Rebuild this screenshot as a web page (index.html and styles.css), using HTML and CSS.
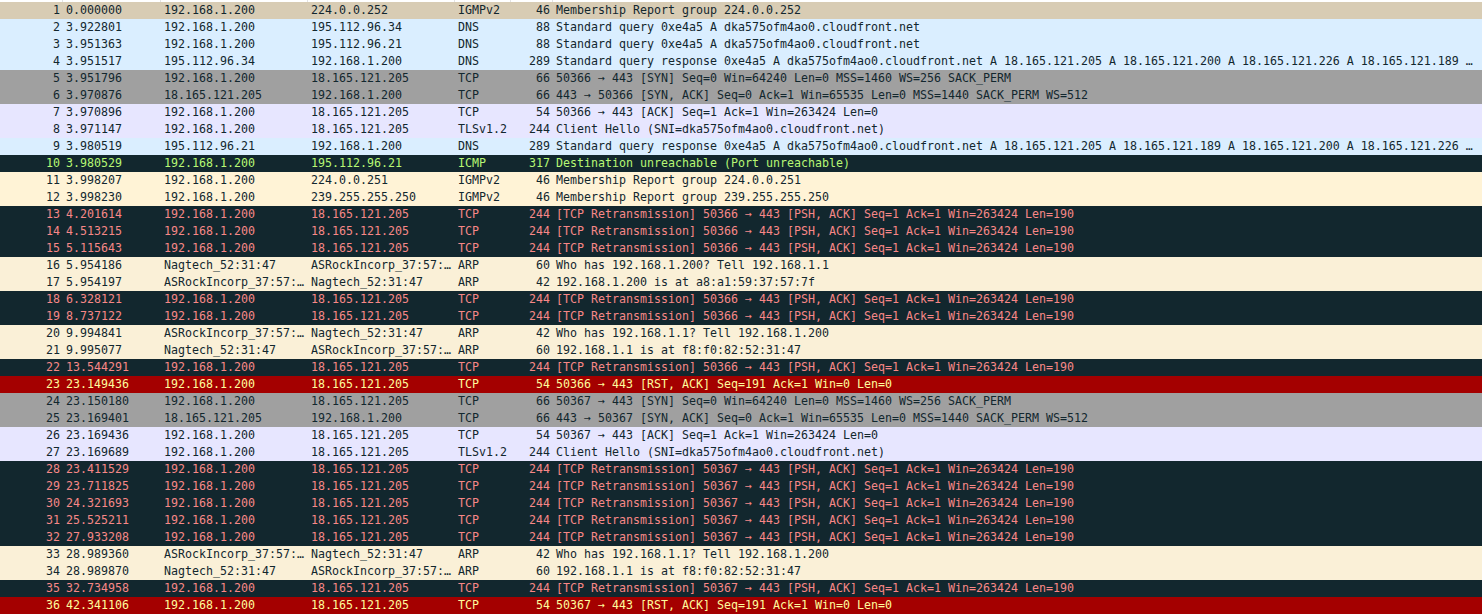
FILE: index.html
```html
<!DOCTYPE html>
<html lang="en">
<head>
<meta charset="utf-8">
<title>Packet list</title>
<link rel="stylesheet" href="styles.css">
</head>
<body>
<div class="head"><span class="hc hc-no"></span><span class="hc hc-time"></span><span class="hc hc-addr"></span><span class="hc hc-addr"></span><span class="hc hc-proto"></span><span class="hc hc-len"></span></div>
<div class="list">
<div class="row igmp1"><span class="no">1</span><span class="time">0.000000</span><span class="src">192.168.1.200</span><span class="dst">224.0.0.252</span><span class="proto">IGMPv2</span><span class="len">46</span><span class="info">Membership Report group 224.0.0.252</span></div>
<div class="row dns"><span class="no">2</span><span class="time">3.922801</span><span class="src">192.168.1.200</span><span class="dst">195.112.96.34</span><span class="proto">DNS</span><span class="len">88</span><span class="info">Standard query 0xe4a5 A dka575ofm4ao0.cloudfront.net</span></div>
<div class="row dns"><span class="no">3</span><span class="time">3.951363</span><span class="src">192.168.1.200</span><span class="dst">195.112.96.21</span><span class="proto">DNS</span><span class="len">88</span><span class="info">Standard query 0xe4a5 A dka575ofm4ao0.cloudfront.net</span></div>
<div class="row dns"><span class="no">4</span><span class="time">3.951517</span><span class="src">195.112.96.34</span><span class="dst">192.168.1.200</span><span class="proto">DNS</span><span class="len">289</span><span class="info">Standard query response 0xe4a5 A dka575ofm4ao0.cloudfront.net A 18.165.121.205 A 18.165.121.200 A 18.165.121.226 A 18.165.121.189 …</span></div>
<div class="row syn"><span class="no">5</span><span class="time">3.951796</span><span class="src">192.168.1.200</span><span class="dst">18.165.121.205</span><span class="proto">TCP</span><span class="len">66</span><span class="info">50366 → 443 [SYN] Seq=0 Win=64240 Len=0 MSS=1460 WS=256 SACK_PERM</span></div>
<div class="row syn"><span class="no">6</span><span class="time">3.970876</span><span class="src">18.165.121.205</span><span class="dst">192.168.1.200</span><span class="proto">TCP</span><span class="len">66</span><span class="info">443 → 50366 [SYN, ACK] Seq=0 Ack=1 Win=65535 Len=0 MSS=1440 SACK_PERM WS=512</span></div>
<div class="row tcp"><span class="no">7</span><span class="time">3.970896</span><span class="src">192.168.1.200</span><span class="dst">18.165.121.205</span><span class="proto">TCP</span><span class="len">54</span><span class="info">50366 → 443 [ACK] Seq=1 Ack=1 Win=263424 Len=0</span></div>
<div class="row tcp"><span class="no">8</span><span class="time">3.971147</span><span class="src">192.168.1.200</span><span class="dst">18.165.121.205</span><span class="proto">TLSv1.2</span><span class="len">244</span><span class="info">Client Hello (SNI=dka575ofm4ao0.cloudfront.net)</span></div>
<div class="row dns"><span class="no">9</span><span class="time">3.980519</span><span class="src">195.112.96.21</span><span class="dst">192.168.1.200</span><span class="proto">DNS</span><span class="len">289</span><span class="info">Standard query response 0xe4a5 A dka575ofm4ao0.cloudfront.net A 18.165.121.205 A 18.165.121.189 A 18.165.121.200 A 18.165.121.226 …</span></div>
<div class="row icmp"><span class="no">10</span><span class="time">3.980529</span><span class="src">192.168.1.200</span><span class="dst">195.112.96.21</span><span class="proto">ICMP</span><span class="len">317</span><span class="info">Destination unreachable (Port unreachable)</span></div>
<div class="row igmp2"><span class="no">11</span><span class="time">3.998207</span><span class="src">192.168.1.200</span><span class="dst">224.0.0.251</span><span class="proto">IGMPv2</span><span class="len">46</span><span class="info">Membership Report group 224.0.0.251</span></div>
<div class="row igmp2"><span class="no">12</span><span class="time">3.998230</span><span class="src">192.168.1.200</span><span class="dst">239.255.255.250</span><span class="proto">IGMPv2</span><span class="len">46</span><span class="info">Membership Report group 239.255.255.250</span></div>
<div class="row bad"><span class="no">13</span><span class="time">4.201614</span><span class="src">192.168.1.200</span><span class="dst">18.165.121.205</span><span class="proto">TCP</span><span class="len">244</span><span class="info">[TCP Retransmission] 50366 → 443 [PSH, ACK] Seq=1 Ack=1 Win=263424 Len=190</span></div>
<div class="row bad"><span class="no">14</span><span class="time">4.513215</span><span class="src">192.168.1.200</span><span class="dst">18.165.121.205</span><span class="proto">TCP</span><span class="len">244</span><span class="info">[TCP Retransmission] 50366 → 443 [PSH, ACK] Seq=1 Ack=1 Win=263424 Len=190</span></div>
<div class="row bad"><span class="no">15</span><span class="time">5.115643</span><span class="src">192.168.1.200</span><span class="dst">18.165.121.205</span><span class="proto">TCP</span><span class="len">244</span><span class="info">[TCP Retransmission] 50366 → 443 [PSH, ACK] Seq=1 Ack=1 Win=263424 Len=190</span></div>
<div class="row arp"><span class="no">16</span><span class="time">5.954186</span><span class="src">Nagtech_52:31:47</span><span class="dst">ASRockIncorp_37:57:…</span><span class="proto">ARP</span><span class="len">60</span><span class="info">Who has 192.168.1.200? Tell 192.168.1.1</span></div>
<div class="row arp"><span class="no">17</span><span class="time">5.954197</span><span class="src">ASRockIncorp_37:57:…</span><span class="dst">Nagtech_52:31:47</span><span class="proto">ARP</span><span class="len">42</span><span class="info">192.168.1.200 is at a8:a1:59:37:57:7f</span></div>
<div class="row bad"><span class="no">18</span><span class="time">6.328121</span><span class="src">192.168.1.200</span><span class="dst">18.165.121.205</span><span class="proto">TCP</span><span class="len">244</span><span class="info">[TCP Retransmission] 50366 → 443 [PSH, ACK] Seq=1 Ack=1 Win=263424 Len=190</span></div>
<div class="row bad"><span class="no">19</span><span class="time">8.737122</span><span class="src">192.168.1.200</span><span class="dst">18.165.121.205</span><span class="proto">TCP</span><span class="len">244</span><span class="info">[TCP Retransmission] 50366 → 443 [PSH, ACK] Seq=1 Ack=1 Win=263424 Len=190</span></div>
<div class="row arp"><span class="no">20</span><span class="time">9.994841</span><span class="src">ASRockIncorp_37:57:…</span><span class="dst">Nagtech_52:31:47</span><span class="proto">ARP</span><span class="len">42</span><span class="info">Who has 192.168.1.1? Tell 192.168.1.200</span></div>
<div class="row arp"><span class="no">21</span><span class="time">9.995077</span><span class="src">Nagtech_52:31:47</span><span class="dst">ASRockIncorp_37:57:…</span><span class="proto">ARP</span><span class="len">60</span><span class="info">192.168.1.1 is at f8:f0:82:52:31:47</span></div>
<div class="row bad"><span class="no">22</span><span class="time">13.544291</span><span class="src">192.168.1.200</span><span class="dst">18.165.121.205</span><span class="proto">TCP</span><span class="len">244</span><span class="info">[TCP Retransmission] 50366 → 443 [PSH, ACK] Seq=1 Ack=1 Win=263424 Len=190</span></div>
<div class="row rst"><span class="no">23</span><span class="time">23.149436</span><span class="src">192.168.1.200</span><span class="dst">18.165.121.205</span><span class="proto">TCP</span><span class="len">54</span><span class="info">50366 → 443 [RST, ACK] Seq=191 Ack=1 Win=0 Len=0</span></div>
<div class="row syn"><span class="no">24</span><span class="time">23.150180</span><span class="src">192.168.1.200</span><span class="dst">18.165.121.205</span><span class="proto">TCP</span><span class="len">66</span><span class="info">50367 → 443 [SYN] Seq=0 Win=64240 Len=0 MSS=1460 WS=256 SACK_PERM</span></div>
<div class="row syn"><span class="no">25</span><span class="time">23.169401</span><span class="src">18.165.121.205</span><span class="dst">192.168.1.200</span><span class="proto">TCP</span><span class="len">66</span><span class="info">443 → 50367 [SYN, ACK] Seq=0 Ack=1 Win=65535 Len=0 MSS=1440 SACK_PERM WS=512</span></div>
<div class="row tcp"><span class="no">26</span><span class="time">23.169436</span><span class="src">192.168.1.200</span><span class="dst">18.165.121.205</span><span class="proto">TCP</span><span class="len">54</span><span class="info">50367 → 443 [ACK] Seq=1 Ack=1 Win=263424 Len=0</span></div>
<div class="row tcp"><span class="no">27</span><span class="time">23.169689</span><span class="src">192.168.1.200</span><span class="dst">18.165.121.205</span><span class="proto">TLSv1.2</span><span class="len">244</span><span class="info">Client Hello (SNI=dka575ofm4ao0.cloudfront.net)</span></div>
<div class="row bad"><span class="no">28</span><span class="time">23.411529</span><span class="src">192.168.1.200</span><span class="dst">18.165.121.205</span><span class="proto">TCP</span><span class="len">244</span><span class="info">[TCP Retransmission] 50367 → 443 [PSH, ACK] Seq=1 Ack=1 Win=263424 Len=190</span></div>
<div class="row bad"><span class="no">29</span><span class="time">23.711825</span><span class="src">192.168.1.200</span><span class="dst">18.165.121.205</span><span class="proto">TCP</span><span class="len">244</span><span class="info">[TCP Retransmission] 50367 → 443 [PSH, ACK] Seq=1 Ack=1 Win=263424 Len=190</span></div>
<div class="row bad"><span class="no">30</span><span class="time">24.321693</span><span class="src">192.168.1.200</span><span class="dst">18.165.121.205</span><span class="proto">TCP</span><span class="len">244</span><span class="info">[TCP Retransmission] 50367 → 443 [PSH, ACK] Seq=1 Ack=1 Win=263424 Len=190</span></div>
<div class="row bad"><span class="no">31</span><span class="time">25.525211</span><span class="src">192.168.1.200</span><span class="dst">18.165.121.205</span><span class="proto">TCP</span><span class="len">244</span><span class="info">[TCP Retransmission] 50367 → 443 [PSH, ACK] Seq=1 Ack=1 Win=263424 Len=190</span></div>
<div class="row bad"><span class="no">32</span><span class="time">27.933208</span><span class="src">192.168.1.200</span><span class="dst">18.165.121.205</span><span class="proto">TCP</span><span class="len">244</span><span class="info">[TCP Retransmission] 50367 → 443 [PSH, ACK] Seq=1 Ack=1 Win=263424 Len=190</span></div>
<div class="row arp"><span class="no">33</span><span class="time">28.989360</span><span class="src">ASRockIncorp_37:57:…</span><span class="dst">Nagtech_52:31:47</span><span class="proto">ARP</span><span class="len">42</span><span class="info">Who has 192.168.1.1? Tell 192.168.1.200</span></div>
<div class="row arp"><span class="no">34</span><span class="time">28.989870</span><span class="src">Nagtech_52:31:47</span><span class="dst">ASRockIncorp_37:57:…</span><span class="proto">ARP</span><span class="len">60</span><span class="info">192.168.1.1 is at f8:f0:82:52:31:47</span></div>
<div class="row bad"><span class="no">35</span><span class="time">32.734958</span><span class="src">192.168.1.200</span><span class="dst">18.165.121.205</span><span class="proto">TCP</span><span class="len">244</span><span class="info">[TCP Retransmission] 50367 → 443 [PSH, ACK] Seq=1 Ack=1 Win=263424 Len=190</span></div>
<div class="row rst"><span class="no">36</span><span class="time">42.341106</span><span class="src">192.168.1.200</span><span class="dst">18.165.121.205</span><span class="proto">TCP</span><span class="len">54</span><span class="info">50367 → 443 [RST, ACK] Seq=191 Ack=1 Win=0 Len=0</span></div>
</div>
</body>
</html>
```

FILE: styles.css
```css
html, body {
  margin: 0;
  padding: 0;
  background: #fff;
  overflow: hidden;
}

.head {
  display: flex;
  height: 2px;
}

.hc {
  box-sizing: border-box;
  border-right: 1px solid #e3e3e3;
}

.hc-no { width: 63px; }
.hc-time { width: 98px; }
.hc-addr { width: 147px; }
.hc-proto { width: 56px; }
.hc-len { width: 42px; }

.list {
  font-family: "DejaVu Sans Mono", monospace;
  font-size: 11.63px;
}

.row {
  display: grid;
  grid-template-columns: 60px 104px 147px 147px 60px 32px 1fr;
  height: 17px;
  line-height: 17px;
  white-space: pre;
}

.no, .len { text-align: right; }
.time { padding-left: 6px; }
.info { padding-left: 6px; overflow: hidden; }

.igmp1 { background: #d8ccb4; color: #12272e; }
.igmp2 { background: #fff3d6; color: #12272e; }
.dns { background: #daeeff; color: #12272e; }
.syn { background: #a0a0a0; color: #12272e; }
.tcp { background: #e7e6ff; color: #12272e; }
.icmp { background: #12272e; color: #b7f774; }
.bad { background: #12272e; color: #f78787; }
.arp { background: #faf0d7; color: #12272e; }
.rst { background: #a40000; color: #fffc9c; }
```
